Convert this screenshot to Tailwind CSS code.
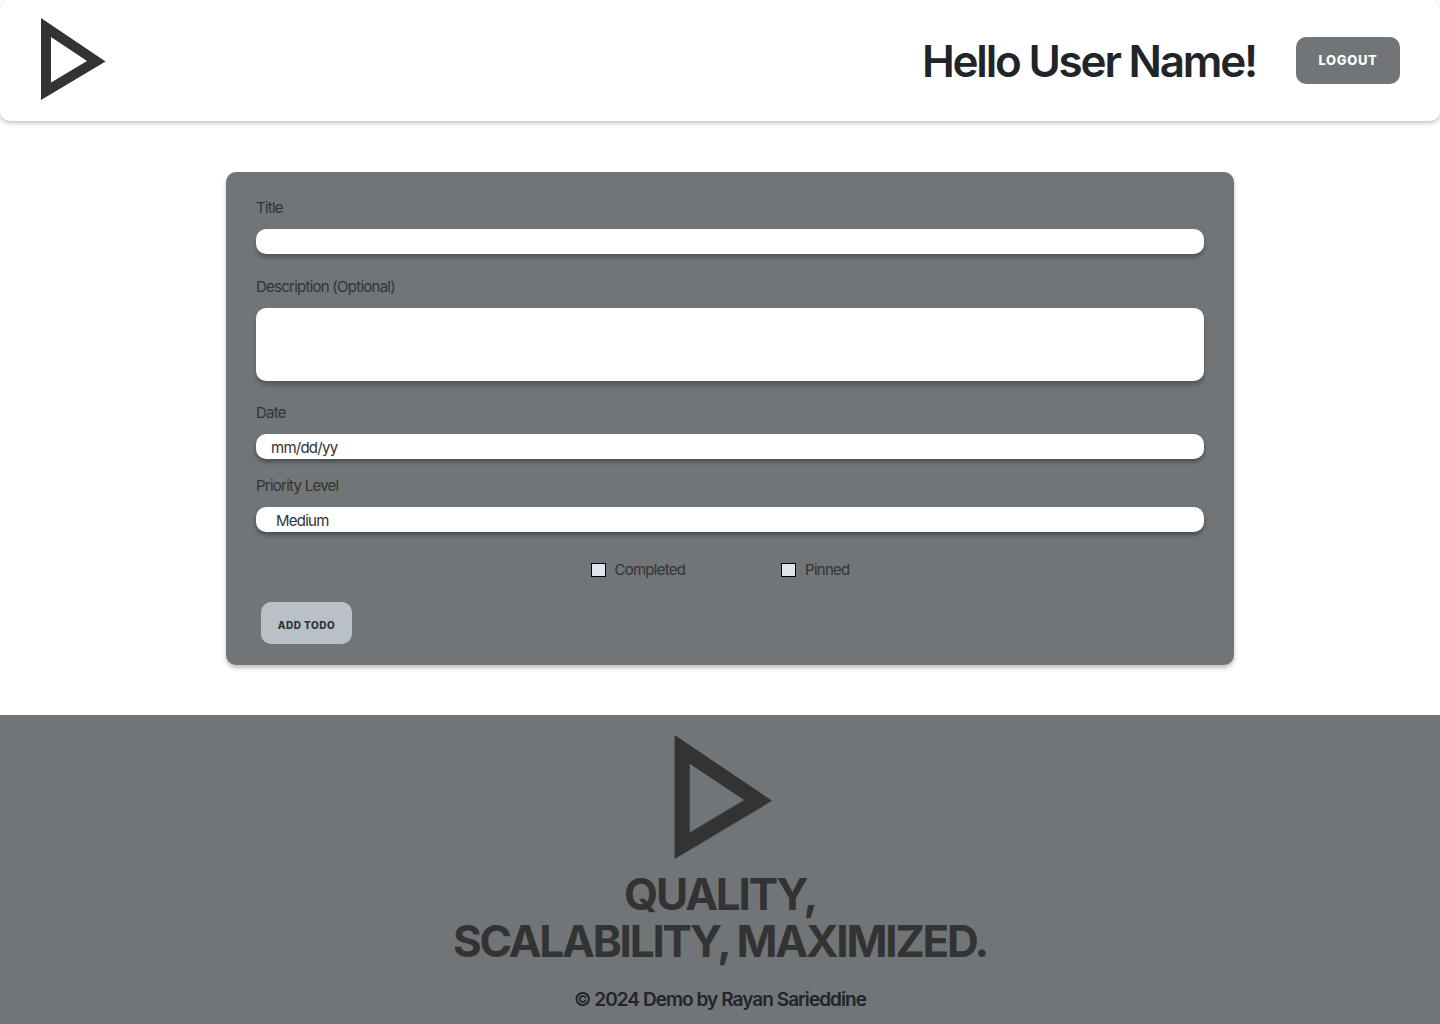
<!DOCTYPE html>
<html lang="en">
<head>
<meta charset="utf-8">
<meta name="viewport" content="width=device-width, initial-scale=1">
<title>Add todo</title>
<script src="https://cdn.jsdelivr.net/npm/@tailwindcss/browser@4"></script>
</head>
<body class="flex min-h-screen flex-col bg-white font-['Inter',sans-serif] text-[#333333]">

  <header class="flex h-[121px] shrink-0 items-center justify-between rounded-[10px] bg-white px-10 shadow-[0_2px_4px_rgba(0,0,0,0.25)]">
    <a href="#" aria-label="Home" class="pb-1">
      <svg class="h-[82px] w-[66px]" viewBox="0 0 66 82" fill="#333333" aria-hidden="true">
        <path fill-rule="evenodd" d="M1 0 L65.500 43.500 L1 82 Z M11 19 V64.500 L47 43 Z"/>
      </svg>
    </a>
    <div class="flex items-center gap-10">
      <h1 class="text-[44px] leading-[56px] font-semibold tracking-tighter text-[#212529]">Hello User Name!</h1>
      <button type="button" class="h-[47px] w-[104px] rounded-[10px] bg-[#717577] text-[13px] font-extrabold tracking-wider text-white">LOGOUT</button>
    </div>
  </header>

  <main class="flex justify-center pt-[51px] pb-[50px] pl-5">
    <form class="flex w-full max-w-[1008px] flex-col rounded-[10px] bg-[#717577] px-[30px] pt-[25px] pb-[21px] text-[15px] leading-[22px] tracking-tighter shadow-[0_3px_4px_rgba(0,0,0,0.25)]">
      <label for="title">Title</label>
      <input id="title" type="text" class="mt-[10px] h-[25px] rounded-[10px] bg-white px-[15px] tracking-tighter shadow-[0_4px_4px_rgba(0,0,0,0.25)]">

      <label for="description" class="mt-[22px]">Description (Optional)</label>
      <textarea id="description" class="mt-[10px] h-[73px] resize-none rounded-[10px] bg-white px-[15px] py-1 tracking-tighter shadow-[0_4px_4px_rgba(0,0,0,0.25)]"></textarea>

      <label for="date" class="mt-[21px]">Date</label>
      <input id="date" type="text" placeholder="mm/dd/yy" class="mt-[10px] h-[25px] rounded-[10px] bg-white px-[15px] pt-[2px] tracking-tighter shadow-[0_3px_4px_rgba(0,0,0,0.35)] placeholder:text-[#333333]">

      <label for="priority" class="mt-4">Priority Level</label>
      <select id="priority" class="mt-[10px] h-[25px] appearance-none rounded-[10px] bg-white px-5 pt-[2px] tracking-tighter shadow-[0_3px_4px_rgba(0,0,0,0.35)]">
        <option>Low</option>
        <option selected>Medium</option>
        <option>High</option>
      </select>

      <div class="mt-[27px] flex justify-center gap-24 pr-5">
        <label class="flex items-center gap-[9px]">
          <input type="checkbox" class="h-[14px] w-[15px] appearance-none border border-black bg-[#e0e4ee] checked:bg-[#333333]">Completed
        </label>
        <label class="flex items-center gap-[9px]">
          <input type="checkbox" class="h-[14px] w-[15px] appearance-none border border-black bg-[#e0e4ee] checked:bg-[#333333]">Pinned
        </label>
      </div>

      <button type="submit" class="mt-[21px] ml-[5px] h-[42px] w-[91px] rounded-[10px] bg-[#b8c0c8] pt-1 text-[10px] font-extrabold tracking-wider">ADD TODO</button>
    </form>
  </main>

  <footer class="flex grow flex-col items-center bg-[#717577] pt-5 pb-2 text-center">
    <svg class="ml-1.5 h-[124px] w-[100px]" viewBox="0 0 66 82" fill="#333333" aria-hidden="true">
      <path fill-rule="evenodd" d="M1 0 L65.500 43.500 L1 82 Z M11 19 V64.500 L47 43 Z"/>
    </svg>
    <p class="mt-3 text-[44px] leading-[47px] font-bold tracking-tighter">QUALITY,<br>SCALABILITY, MAXIMIZED.</p>
    <p class="mt-5 text-[19px] leading-[30px] font-semibold tracking-tighter text-[#212529]">© 2024 Demo by Rayan Sarieddine</p>
  </footer>

</body>
</html>
